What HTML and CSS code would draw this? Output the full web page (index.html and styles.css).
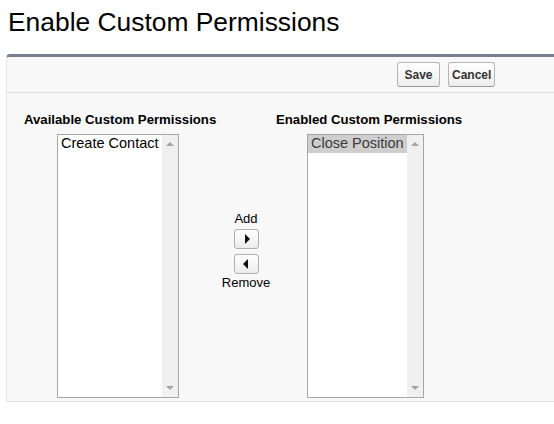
FILE: index.html
```html
<!DOCTYPE html>
<html>
<head>
<meta charset="utf-8">
<link rel="stylesheet" href="styles.css">
</head>
<body>
<h1 class="title">Enable Custom Permissions</h1>
<div class="panel">
  <div class="toolbar">
    <button class="btn">Save</button>
    <button class="btn">Cancel</button>
  </div>
  <div class="content">
    <div class="col col-left">
      <div class="label">Available Custom Permissions</div>
      <div class="listbox lb-left" role="listbox">
        <div class="options">
          <div class="option">Create Contact</div>
        </div>
        <div class="scroll"><span class="arrow-up"></span><span class="arrow-down"></span></div>
      </div>
    </div>
    <div class="col col-mid">
      <div class="mid-text">Add</div>
      <button class="arrow-btn add"><span class="tri-right"></span></button>
      <button class="arrow-btn remove"><span class="tri-left"></span></button>
      <div class="mid-text">Remove</div>
    </div>
    <div class="col col-right">
      <div class="label">Enabled Custom Permissions</div>
      <div class="listbox lb-right" role="listbox">
        <div class="options">
          <div class="option selected">Close Position</div>
        </div>
        <div class="scroll"><span class="arrow-up"></span><span class="arrow-down"></span></div>
      </div>
    </div>
  </div>
</div>
</body>
</html>
```
FILE: styles.css
```css
html, body {
  margin: 0;
  padding: 0;
  background: #ffffff;
  font-family: Arial, "Liberation Sans", sans-serif;
  color: #000;
  overflow: hidden;
}
.title {
  margin: 7px 0 0 8px;
  font-size: 26.4px;
  line-height: 30px;
  font-weight: normal;
  color: #000;
}
.panel {
  margin: 17px 0 0 6px;
  background: #f8f8f8;
  border-top: 3px solid #767f92;
  border-left: 1px solid #e6e6e6;
  border-bottom: 1px solid #e3e3e3;
  border-radius: 4px 0 0 0;
}
.toolbar {
  display: flex;
  gap: 8px;
  padding: 5px 0 5px 390px;
  border-bottom: 1px solid #dcdcdc;
}
.btn {
  height: 25px;
  padding: 0 3px;
  font-family: Arial, "Liberation Sans", sans-serif;
  font-size: 12px;
  font-weight: bold;
  color: #333;
  background: linear-gradient(#ffffff, #ededed);
  border: 1px solid #b5b5b5;
  border-bottom-color: #9a9a9a;
  border-radius: 3px;
}
.btn:first-child { min-width: 43px; }
.content {
  display: flex;
  padding: 19px 0 3px 17px;
}
.col { display: flex; flex-direction: column; }
.col-left { width: 192px; }
.col-right { width: 200px; }
.label {
  font-size: 13.2px;
  line-height: 15px;
  font-weight: bold;
  color: #000;
  white-space: nowrap;
  margin-bottom: 7px;
}
.listbox {
  display: flex;
  height: 264px;
  box-sizing: border-box;
  border: 1px solid #a6a6a6;
  background: #fff;
}
.lb-left { width: 122px; margin-left: 33px; }
.lb-right { width: 117px; margin-left: 31px; }
.options { flex: 1; }
.option {
  font-size: 14.5px;
  line-height: 17px;
  padding: 0 3px 1px;
  white-space: nowrap;
  color: #000;
}
.option.selected {
  background: #cecece;
  color: #3a3a3a;
}
.scroll {
  width: 17px;
  background: #f0f0f0;
  display: flex;
  flex-direction: column;
  justify-content: space-between;
  align-items: center;
  padding: 7px 0 7px;
}
.arrow-up {
  width: 0; height: 0;
  border-left: 4px solid transparent;
  border-right: 4px solid transparent;
  border-bottom: 4px solid #a3a3a3;
}
.arrow-down {
  width: 0; height: 0;
  border-left: 4px solid transparent;
  border-right: 4px solid transparent;
  border-top: 4px solid #a3a3a3;
}
.col-mid {
  width: 60px;
  align-items: center;
  padding-top: 99px;
}
.mid-text {
  font-size: 13px;
  line-height: 15px;
  color: #000;
}
.arrow-btn {
  width: 25px;
  height: 20px;
  padding: 0;
  display: flex;
  align-items: center;
  justify-content: center;
  background: linear-gradient(#ffffff, #ececec);
  border: 1px solid #b0b0b0;
  border-radius: 3px;
}
.arrow-btn.add { margin-top: 3px; }
.arrow-btn.remove { margin-top: 5px; margin-bottom: 1px; }
.tri-right {
  width: 0; height: 0;
  border-top: 5px solid transparent;
  border-bottom: 5px solid transparent;
  border-left: 5px solid #111;
  margin-left: 2px;
}
.tri-left {
  width: 0; height: 0;
  border-top: 5px solid transparent;
  border-bottom: 5px solid transparent;
  border-right: 5px solid #111;
  margin-right: 2px;
}
```
